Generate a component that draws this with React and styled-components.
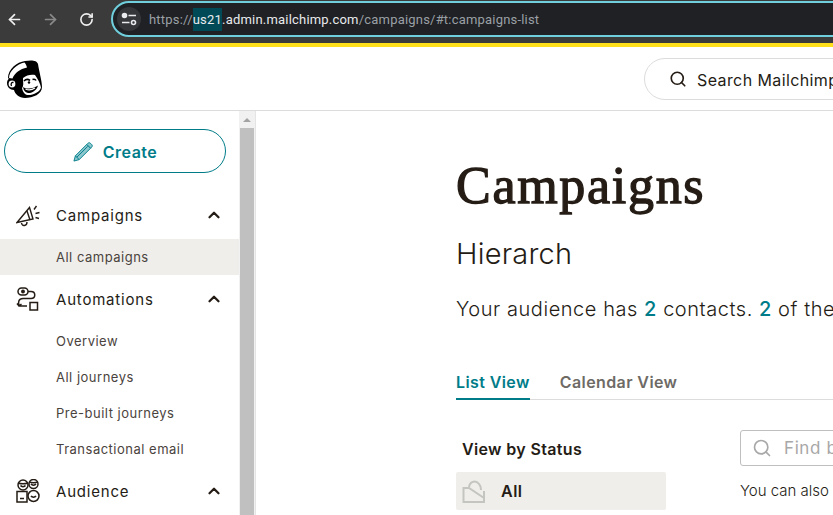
import React from "react";
import styled, { createGlobalStyle } from "styled-components";
import { ArrowLeft, ArrowRight, RotateCw, Search, ChevronUp } from "lucide-react";

const GlobalStyle = createGlobalStyle`
  html, body {
    margin: 0;
    padding: 0;
    width: 833px;
    height: 515px;
    overflow: hidden;
    background: #fff;
    font-family: "Liberation Sans", Arial, sans-serif;
    color: #241c15;
  }
  * { box-sizing: border-box; }
`;

const Page = styled.div`
  width: 833px;
  height: 515px;
  display: flex;
  flex-direction: column;
  overflow: hidden;
`;

/* browser chrome */
const Chrome = styled.div`
  height: 43px;
  flex: none;
  background: #3b3b3b;
  display: flex;
  align-items: flex-start;
  padding-top: 1px;
`;

const NavButtons = styled.div`
  width: 111px;
  height: 36px;
  flex: none;
  display: flex;
  align-items: center;
  padding-left: 4px;
  gap: 15px;
`;

const NavButton = styled.span`
  display: flex;
  width: 21px;
  justify-content: center;
  color: ${(p) => (p.$off ? "#8a8a8a" : "#f0f0f0")};
`;

const UrlBar = styled.div`
  flex: 1;
  height: 36px;
  margin-right: -40px;
  border: 2px solid #6fcfdd;
  border-radius: 18px 0 0 18px;
  background: #202124;
  display: flex;
  align-items: center;
  padding-left: 4px;
  font-family: "Roboto", sans-serif;
  font-size: 13px;
  letter-spacing: 0.2px;
  color: #9aa0a6;
  white-space: nowrap;
`;

const SiteInfo = styled.span`
  width: 24px;
  height: 24px;
  margin-right: 8px;
  border-radius: 50%;
  background: #35363a;
  display: flex;
  align-items: center;
  justify-content: center;
`;

const Host = styled.span`
  color: #e8eaed;
`;

const Selected = styled.span`
  background: #004a57;
  color: #e8eaed;
  padding: 4px 0;
`;

const YellowLine = styled.div`
  height: 4px;
  flex: none;
  background: #ffe01b;
`;

/* app header */
const Header = styled.header`
  height: 64px;
  flex: none;
  background: #fff;
  border-bottom: 1px solid #dcdcdc;
  display: flex;
  align-items: center;
  padding-left: 5px;
`;

const Logo = styled.svg`
  width: 38px;
  height: 40px;
  flex: none;
`;

const SearchPill = styled.div`
  margin-left: 601px;
  width: 300px;
  height: 42px;
  flex: none;
  border: 1px solid #dcdcdc;
  border-radius: 21px;
  display: flex;
  align-items: center;
  gap: 10px;
  padding-left: 24px;
  font-family: "Inter", sans-serif;
  font-size: 16px;
  letter-spacing: 0.4px;
  white-space: nowrap;
`;

const SearchLabel = styled.span`
  padding-top: 2px;
`;

/* body */
const Body = styled.div`
  flex: 1;
  min-height: 0;
  display: flex;
`;

const Sidebar = styled.nav`
  width: 239px;
  flex: none;
  padding-top: 18px;
  font-family: "Inter", sans-serif;
`;

const CreateButton = styled.button`
  display: flex;
  align-items: center;
  justify-content: center;
  gap: 10px;
  width: 222px;
  height: 44px;
  margin: 0 0 18px 4px;
  padding: 2px 0 0;
  background: #fff;
  border: 1px solid #007c89;
  border-radius: 22px;
  color: #007c89;
  font-family: "Inter", sans-serif;
  font-size: 16px;
  font-weight: 600;
  letter-spacing: 0.5px;
`;

const Section = styled.div`
  display: flex;
  align-items: center;
  height: 48px;
  padding-left: 16px;
  font-size: 15px;
  letter-spacing: 0.8px;
  color: #241c15;
`;

const SectionIcon = styled.svg`
  width: 24px;
  height: 24px;
  flex: none;
  margin-right: 16px;
`;

const SectionLabel = styled.span`
  flex: 1;
`;

const Toggle = styled.span`
  display: flex;
  margin-right: 16px;
  color: #241c15;
`;

const SubItem = styled.div`
  height: 36px;
  display: flex;
  align-items: center;
  padding-left: 56px;
  font-size: 13px;
  letter-spacing: 0.5px;
  color: #4a433d;
  background: ${(p) => (p.$active ? "#efeeea" : "transparent")};
`;

const Scrollbar = styled.div`
  width: 17px;
  flex: none;
  background: #f1f1f1;
  border-right: 1px solid #e4e4e4;
  display: flex;
  flex-direction: column;
  align-items: center;
`;

const ScrollArrow = styled.div`
  height: 17px;
  flex: none;
  display: flex;
  align-items: center;
  justify-content: center;
  &::before {
    content: "";
    border-left: 4px solid transparent;
    border-right: 4px solid transparent;
    border-bottom: 4px solid #a3a3a3;
  }
`;

const ScrollThumb = styled.div`
  width: 14px;
  flex: 1;
  background: #c0c0c0;
`;

const Main = styled.main`
  flex: 1;
  min-width: 0;
  padding: 49px 0 0 200px;
  overflow: hidden;
`;

const Title = styled.h1`
  margin: 0;
  font-family: "Liberation Serif", serif;
  font-size: 52px;
  font-weight: 400;
  line-height: 52px;
  letter-spacing: 1.7px;
  -webkit-text-stroke: 1.3px #241c15;
  color: #241c15;
`;

const Subtitle = styled.h2`
  margin: 24px 0 0;
  font-family: "Inter", sans-serif;
  font-size: 29px;
  font-weight: 300;
  letter-spacing: 0.2px;
  line-height: 36px;
`;

const Summary = styled.p`
  margin: 23px 0 0;
  font-family: "Inter", sans-serif;
  font-size: 20px;
  font-weight: 300;
  letter-spacing: 0.55px;
  line-height: 28px;
  white-space: nowrap;
`;

const Count = styled.span`
  color: #007c89;
  font-weight: 500;
`;

const Tabs = styled.div`
  margin-top: 40px;
  display: flex;
  gap: 30px;
  height: 37px;
  border-bottom: 1px solid #dcdcdc;
  font-family: "Inter", sans-serif;
  font-size: 16px;
  font-weight: 600;
  letter-spacing: 0.4px;
`;

const Tab = styled.div`
  padding-top: 9px;
  margin-bottom: -1px;
  color: ${(p) => (p.$active ? "#007c89" : "#6e6a65")};
  border-bottom: 2px solid ${(p) => (p.$active ? "#007c89" : "transparent")};
`;

const Columns = styled.div`
  display: flex;
  gap: 74px;
  margin-top: 30px;
`;

const StatusColumn = styled.div`
  width: 210px;
  flex: none;
  font-family: "Inter", sans-serif;
`;

const StatusTitle = styled.div`
  padding-left: 6px;
  font-size: 16px;
  font-weight: 600;
  letter-spacing: 0.35px;
  line-height: 20px;
  margin-top: 9px;
`;

const StatusRow = styled.div`
  margin-top: 13px;
  height: 38px;
  background: #efeeea;
  border-radius: 2px;
  display: flex;
  align-items: center;
  padding-left: 6px;
  gap: 15px;
  font-size: 16px;
  font-weight: 600;
  letter-spacing: 0.5px;
`;

const ListColumn = styled.div`
  flex: 1;
  font-family: "Inter", sans-serif;
`;

const FindBox = styled.div`
  width: 300px;
  height: 36px;
  border: 1px solid #bfbfbf;
  border-radius: 3px;
  display: flex;
  align-items: center;
  gap: 12px;
  padding-left: 11px;
  color: #a8a8a8;
  font-size: 17px;
  letter-spacing: 0.6px;
  white-space: nowrap;
`;

const Hint = styled.div`
  margin-top: 15px;
  font-size: 15px;
  font-weight: 300;
  white-space: nowrap;
`;

const MonkeyLogo = () => (
  <Logo viewBox="0 0 38 40">
    {/* silhouette */}
    <path d="M3 19 C3 10 12 3 20 2 C26 1 32 1 33 5 C34 12 37 22 37 28 C37 35 28 39 20 39 C14 39 10 35 9 31 C5 31 2 28 2 24 C2 22 3 20 4 20 Z" fill="#000" />
    {/* brim */}
    <path d="M4 19 C4 12 12 5 19.5 3.5 C21 5 21.5 7 22 8.5 C15 10 9.5 14 7.5 19.5 Z" fill="#fff" />
    {/* face */}
    <path d="M18 19 C21 16 27 15 30 16 C33 20 35.5 25 36 28.5 C35 33 28 36.5 22 36 C19 35 17.5 32 17 29 C19 27 18 23 18 19 Z" fill="#fff" />
    <path d="M19 22 C21 20 23 20 25 21.5 M27.5 20.5 C29 20 30.5 20.5 31 21.5" stroke="#000" strokeWidth="1.6" fill="none" />
    <circle cx="24" cy="23.5" r="1.2" fill="#000" />
    <path d="M18 28 C22 30.5 28 30 33 26.5 C32 31 27 34.5 23 34 C20 33.5 18.5 31 18 28 Z" fill="#000" />
    <path d="M20.5 30 C23.5 31.5 27 31 30 29" stroke="#fff" strokeWidth="1.2" fill="none" />
    {/* ear */}
    <circle cx="7" cy="25" r="3.4" fill="#fff" />
    <path d="M8.5 23.5 C6.5 23 5.5 25 6.5 27" stroke="#000" strokeWidth="1.3" fill="none" />
  </Logo>
);

const SiteInfoIcon = () => (
  <svg width="16" height="14" viewBox="0 0 16 14" fill="none" stroke="#e8eaed" strokeWidth="1.6">
    <circle cx="3.5" cy="3.5" r="2" fill="#e8eaed" />
    <path d="M7.5 3.5 H15 M1 10.5 H8.5" />
    <circle cx="12.5" cy="10.5" r="2" />
  </svg>
);

const PencilIcon = () => (
  <svg width="20" height="20" viewBox="0 0 21 21" fill="#8cc8ce" stroke="#007c89" strokeWidth="1">
    <path d="M1 20 L2.5 14.5 L14.5 2.5 L18.5 6.5 L6.5 18.5 Z" />
    <path d="M15.5 1.5 C16.5 0.5 17.5 0.5 18.5 1.5 L19.5 2.5 C20.5 3.5 20.5 4.5 19.5 5.5 L18.5 6.5 L14.5 2.5 Z" />
    <path d="M4 16 L15.5 4.5 M2.5 14.5 L6.5 18.5" fill="none" />
  </svg>
);

const CampaignsIcon = () => (
  <SectionIcon viewBox="0 0 24 24" fill="none" stroke="#241c15" strokeWidth="1.4">
    <path d="M1 19.5 L13.5 4.5 L17 16 Z M5.5 20 C6 23.5 11 23.5 11 19" />
    <path d="M11 8 L14 17 M18 6.5 L20.5 3 M19.5 10.5 L23.5 9.5 M19.5 14.5 L23 15.5" />
  </SectionIcon>
);

const AutomationsIcon = () => (
  <SectionIcon viewBox="0 0 24 24" fill="none" stroke="#241c15" strokeWidth="1.5">
    <rect x="2" y="1" width="10" height="7" rx="3.5" />
    <circle cx="7" cy="4.5" r="1.2" fill="#241c15" />
    <path d="M12 4.5 H15 C20 4.5 20 11.5 15 11.5 H7 C2.5 11.5 2 15 3 19 M1 16.5 L3 19 L5.5 17 M3 19 H11" />
    <rect x="14" y="15.5" width="7.5" height="7.5" />
  </SectionIcon>
);

const AudienceIcon = () => (
  <SectionIcon viewBox="0 0 24 24" fill="none" stroke="#241c15" strokeWidth="1.5">
    <circle cx="7" cy="6" r="5" />
    <circle cx="17.5" cy="5" r="4.5" />
    <rect x="1" y="12.5" width="10" height="10.5" />
    <circle cx="17.5" cy="17" r="5.5" />
    <path d="M4.5 6.5 C5.5 8 8.5 8 9.5 6.5 M15 5 C16 6.5 19 6.5 20 5 M4 19.5 H8 M15 17 C16 18.5 19 18.5 20 17 M2 4 C5 5 9 5 12 4 M13 3 C16 4 19 4 22 3" />
  </SectionIcon>
);

const StatusIcon = () => (
  <svg width="24" height="24" viewBox="0 0 24 24" fill="none" stroke="#c4c4c0" strokeWidth="2">
    <path d="M7 8 C8 2 14 1 17 5 C19 7 19 9 19 11" />
    <path d="M1.5 9 H7 L22 19 V23 H1.5 Z M22 12 V19" />
  </svg>
);

const Chevron = () => (
  <Toggle>
    <ChevronUp size={18} strokeWidth={3} />
  </Toggle>
);

export default function App() {
  return (
    <Page>
      <GlobalStyle />
      <Chrome>
        <NavButtons>
          <NavButton><ArrowLeft size={17} strokeWidth={2.4} /></NavButton>
          <NavButton $off><ArrowRight size={17} strokeWidth={2.4} /></NavButton>
          <NavButton><RotateCw size={15} strokeWidth={2.6} /></NavButton>
        </NavButtons>
        <UrlBar>
          <SiteInfo><SiteInfoIcon /></SiteInfo>
          https://<Selected>us21</Selected><Host>.admin.mailchimp.com</Host>/campaigns/#t:campaigns-list
        </UrlBar>
      </Chrome>
      <YellowLine />
      <Header>
        <MonkeyLogo />
        <SearchPill>
          <Search size={18} strokeWidth={2.2} />
          <SearchLabel>Search Mailchimp</SearchLabel>
        </SearchPill>
      </Header>
      <Body>
        <Sidebar>
          <CreateButton>
            <PencilIcon />
            Create
          </CreateButton>
          <Section>
            <CampaignsIcon />
            <SectionLabel>Campaigns</SectionLabel>
            <Chevron />
          </Section>
          <SubItem $active>All campaigns</SubItem>
          <Section>
            <AutomationsIcon />
            <SectionLabel>Automations</SectionLabel>
            <Chevron />
          </Section>
          <SubItem>Overview</SubItem>
          <SubItem>All journeys</SubItem>
          <SubItem>Pre-built journeys</SubItem>
          <SubItem>Transactional email</SubItem>
          <Section>
            <AudienceIcon />
            <SectionLabel>Audience</SectionLabel>
            <Chevron />
          </Section>
        </Sidebar>
        <Scrollbar>
          <ScrollArrow />
          <ScrollThumb />
        </Scrollbar>
        <Main>
          <Title>Campaigns</Title>
          <Subtitle>Hierarch</Subtitle>
          <Summary>
            Your audience has <Count>2</Count> contacts. <Count>2</Count> of them are subscribed.
          </Summary>
          <Tabs>
            <Tab $active>List View</Tab>
            <Tab>Calendar View</Tab>
          </Tabs>
          <Columns>
            <StatusColumn>
              <StatusTitle>View by Status</StatusTitle>
              <StatusRow><StatusIcon />All</StatusRow>
            </StatusColumn>
            <ListColumn>
              <FindBox>
                <Search size={20} />
                Find by name
              </FindBox>
              <Hint>You can also</Hint>
            </ListColumn>
          </Columns>
        </Main>
      </Body>
    </Page>
  );
}
